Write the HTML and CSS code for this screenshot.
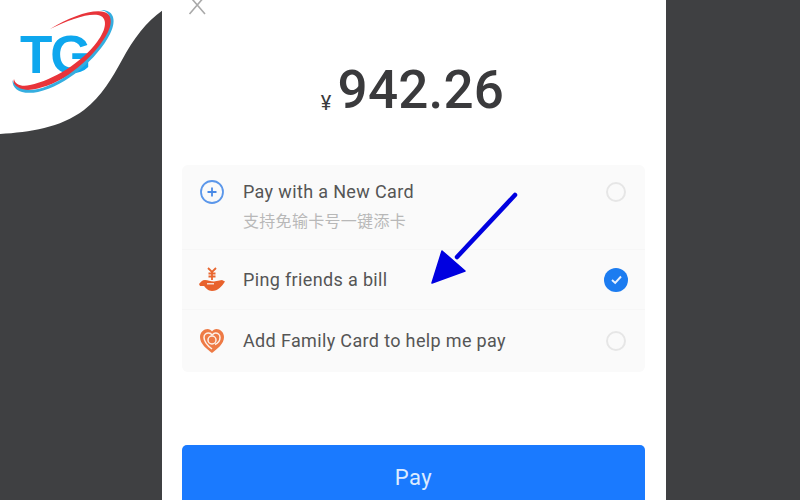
FILE: index.html
```html
<!DOCTYPE html>
<html lang="en">
<head>
    <meta charset="UTF-8">
    <title>Pay</title>
    <link rel="stylesheet" href="styles.css">
</head>
<body>

    <div class="phone">
        <svg class="close" width="18" height="15" viewBox="0 4 18 15">
            <path d="M1.500 0 L17 18 M17 0 L1.500 18" stroke="#a9a9a9" stroke-width="1.600" fill="none"/>
        </svg>

        <div class="amount"><span class="currency">¥</span>942.26</div>

        <div class="card">
            <div class="row row-first">
                <svg class="icon" width="26" height="26" viewBox="0 0 26 26">
                    <circle cx="13" cy="13" r="11" fill="none" stroke="#5b97ea" stroke-width="1.800"/>
                    <path d="M13 8.500 V17.500 M8.500 13 H17.500" stroke="#4a8ae6" stroke-width="1.800" fill="none"/>
                </svg>
                <div class="text">
                    <div class="label">Pay with a New Card</div>
                    <div class="sub">支持免输卡号一键添卡</div>
                </div>
                <span class="radio"></span>
            </div>
            <div class="row row-second">
                <svg class="icon" width="26" height="26" viewBox="0 0 26 26">
                    <path d="M9 1 L13 5 L17 1 M13 5 V13 M9.500 6.500 H16.500 M9.500 9.500 H16.500" stroke="#e8662f" stroke-width="1.800" fill="none"/>
                    <path d="M0 17 C2 15 3 13 6 13 C9 13 11 14.500 15 14.500 L23 13 L26 14.500 C23 19 19 24 13 24 C9 24 7 21 5 19 L1 19 Z" fill="#e8622c"/>
                    <path d="M8 16.800 H15" stroke="#fafafa" stroke-width="1.200" fill="none"/>
                </svg>
                <div class="text">
                    <div class="label">Ping friends a bill</div>
                </div>
                <span class="radio radio-on">
                    <svg width="13" height="13" viewBox="0 0 13 13">
                        <path d="M2 7 L5.200 10 L11 3.500" stroke="#e8f1ff" stroke-width="1.900" fill="none"/>
                    </svg>
                </span>
            </div>
            <div class="row row-third">
                <svg class="icon" width="26" height="26" viewBox="0 0 26 26">
                    <path d="M13 25 C8 21 1 16 1 9 C1 4 5 1 8.500 1 C10.500 1 12 2 13 3.500 C14 2 15.500 1 17.500 1 C21 1 25 4 25 9 C25 16 18 21 13 25 Z" fill="#ee7a45"/>
                    <path d="M13 21 C9 18 5 14 5 9.500 C5 6.500 7.500 5 9.500 5 C11 5 12.500 6 13 7 C14 6 15 5 16.500 5 C18.500 5 21 6.500 21 9.500 C21 12 19.500 15 16 16.500" fill="none" stroke="#fdf0e8" stroke-width="1.500"/>
                    <circle cx="13" cy="12" r="4" fill="none" stroke="#fdf0e8" stroke-width="1.500"/>
                </svg>
                <div class="text">
                    <div class="label">Add Family Card to help me pay</div>
                </div>
                <span class="radio"></span>
            </div>
        </div>

        <div class="pay-button">Pay</div>
    </div>

    <!-- white corner with the logo -->
    <svg class="logo" width="170" height="140" viewBox="0 0 170 140">
        <path d="M0 0 H163 V10 C146 22 134 38 122 60 C112 78 102 96 84 110 C60 128 30 132 0 134 Z" fill="#fff"/>
        <text class="logo-text" x="20" y="73">TG</text>
        <path d="M50 29 C70 17 92 9 104 12 C116 15 114 30 100 48 C84 68 54 88 28 90 C16 91 12 85 14 79 C15 85 22 87 30 85 C54 80 82 62 97 42 C107 29 108 17 98 15 C88 13 68 20 50 29 Z" fill="#e8343a"/>
        <path d="M100 10 C112 9 118 18 110 34 C98 58 66 86 38 92 C22 95 12 90 12.500 80 C15 88 24 92 38 89 C64 83 96 56 108 32 C114 20 110 11 100 10 Z" fill="#35aee0"/>
    </svg>

    <!-- arrow drawn over the screenshot -->
    <svg class="arrow" width="100" height="100" viewBox="0 0 100 100">
        <path d="M84 5 L26 67" stroke="#0000e0" stroke-width="4.500" stroke-linecap="round" fill="none"/>
        <path d="M1 93 L11 61 L34 81 Z" fill="#0000e0" stroke="#0000e0" stroke-width="1.500" stroke-linejoin="round"/>
    </svg>

</body>
</html>
```

FILE: styles.css
```css
html, body {
    height: 100%;
}

body {
    margin: 0;
    background-color: #3f4042;
    font-family: 'Roboto', 'Noto Sans CJK SC', sans-serif;
    overflow: hidden;
    position: relative;
}

.phone {
    width: 504px;
    height: 500px;
    margin-left: 162px;
    background: #ffffff;
    padding: 0 21px 0 20px;
    box-sizing: border-box;
    overflow: hidden;
}

.close {
    display: block;
    margin-left: 6px;
}

.amount {
    display: flex;
    justify-content: center;
    align-items: baseline;
    margin-top: 40px;
    height: 70px;
    color: #3a3a3c;
    font-size: 53px;
    font-weight: 500;
    line-height: 70px;
    letter-spacing: 0.2px;
    padding-right: 2px;
}

.currency {
    font-size: 20px;
    font-weight: 400;
    margin-right: 6px;
    position: relative;
    top: 2px;
}

.card {
    margin-top: 40px;
    background: #fafafa;
    border-radius: 6px;
}

.row {
    display: flex;
    padding: 0 18px 0 17px;
    box-sizing: border-box;
}

.row-first {
    height: 85px;
    padding-top: 14px;
    border-bottom: 1px solid #f6f6f6;
}

.row-second {
    height: 60px;
    align-items: center;
    border-bottom: 1px solid #f6f6f6;
}

.row-third {
    height: 62px;
    align-items: center;
}

.icon {
    flex-shrink: 0;
    margin-right: 18px;
}

.text {
    flex: 1;
}

.label {
    color: #555555;
    font-size: 18px;
    line-height: 26px;
    letter-spacing: 0.35px;
}

.sub {
    color: #b8b8b8;
    font-size: 16px;
    line-height: 24px;
    margin-top: 5px;
    letter-spacing: 0.3px;
}

.radio {
    width: 20px;
    height: 20px;
    flex-shrink: 0;
    border: 2px solid #e6e6e6;
    border-radius: 50%;
    box-sizing: border-box;
    margin-right: 1px;
    display: flex;
    align-items: center;
    justify-content: center;
}

.row-first .radio {
    margin-top: 3px;
}

.radio-on {
    width: 24px;
    height: 24px;
    margin-right: -1px;
    background: #1c7cf0;
    border: none;
}

.pay-button {
    margin-top: 73px;
    height: 80px;
    background: #1a7aff;
    border-radius: 5px 5px 0 0;
    color: #dcebff;
    font-size: 22px;
    text-align: center;
    line-height: 66px;
    letter-spacing: 0.5px;
}

.logo {
    position: absolute;
    left: 0;
    top: 0;
}

.logo-text {
    font-family: 'Liberation Sans', sans-serif;
    font-size: 53px;
    font-weight: 700;
    letter-spacing: -2px;
    fill: #0ea7ee;
}

.arrow {
    position: absolute;
    left: 431px;
    top: 190px;
}
```
